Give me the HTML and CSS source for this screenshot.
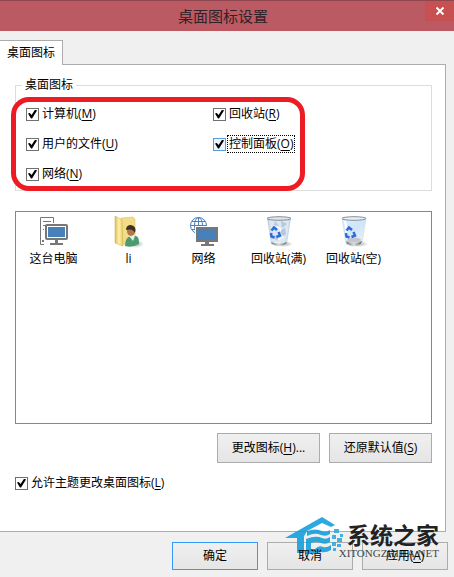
FILE: index.html
```html
<!DOCTYPE html>
<html lang="zh-CN">
<head>
    <meta charset="UTF-8">
    <meta name="viewport" content="width=device-width, initial-scale=1.0">
    <title>桌面图标设置</title>
    <link rel="stylesheet" href="styles.css">
</head>
<body>

    <!-- Title bar -->
    <header class="titlebar">
        <h1>桌面图标设置</h1>
        <button class="close" type="button" aria-label="关闭">
            <svg width="10" height="8" viewBox="0 0 10 8"><path d="M1.5 0.5L8.5 7.5M8.5 0.5L1.5 7.5" stroke="#fff" stroke-width="2"/></svg>
        </button>
    </header>

    <div class="tabs" role="tablist">
        <button class="tab" type="button" role="tab" aria-selected="true">桌面图标</button>
    </div>

    <main class="panel">
        <fieldset class="group">
            <legend>桌面图标</legend>
            <label class="check"><input type="checkbox" checked><span>计算机(<u>M</u>)</span></label>
            <label class="check"><input type="checkbox" checked><span>回收站(<u>R</u>)</span></label>
            <label class="check"><input type="checkbox" checked><span>用户的文件(<u>U</u>)</span></label>
            <label class="check focused"><input type="checkbox" checked><span>控制面板(<u>O</u>)</span></label>
            <label class="check"><input type="checkbox" checked><span>网络(<u>N</u>)</span></label>
        </fieldset>

        <ul class="icons">
            <li>
                <!-- This PC -->
                <svg width="32" height="32" viewBox="0 0 32 32">
                    <path d="M6 28.500H2.500V1.500H15.500V7M5 5.500H13M5 9.500H8M5 13.500H6" fill="none" stroke="#777"/>
                    <path d="M4 24h2v2H4z" fill="#777"/>
                    <rect x="8" y="9" width="21" height="14" rx="1" fill="#fff" stroke="#777" stroke-width="2"/>
                    <rect x="10" y="11" width="17" height="10" fill="#4881b9"/>
                    <path d="M17 24h3v3h5v2H12v-2h5z" fill="#777"/>
                </svg>
                <span>这台电脑</span>
            </li>
            <li>
                <!-- User folder -->
                <svg width="32" height="32" viewBox="0 0 32 32">
                    <defs>
                        <linearGradient id="folder" x2="1"><stop stop-color="#e1bd57"/><stop offset=".5" stop-color="#fff0aa"/><stop offset="1" stop-color="#e6c666"/></linearGradient>
                        <radialGradient id="floor"><stop stop-color="#777" stop-opacity=".6"/><stop offset="1" stop-color="#777" stop-opacity="0"/></radialGradient>
                    </defs>
                    <ellipse cx="23" cy="28" rx="8" ry="4" fill="url(#floor)"/>
                    <path d="M8 2L20 1L22 3V26L8 29z" fill="#f3dc88" stroke="#d9b95b" stroke-width=".5"/>
                    <path d="M2 0L9 4L10 30L2 27z" fill="url(#folder)" stroke="#cfab4c" stroke-width=".5"/>
                    <path d="M12 30Q12 21 18 20Q26 18 26 26V28Q19 32 12 30z" fill="#4a9c70"/>
                    <path d="M16 20L20 17L22 20L20 25z" fill="#e9eee5"/>
                    <ellipse cx="18" cy="15" rx="4" ry="5" fill="#b07747"/>
                    <path d="M13 14Q13 9 18 9Q24 10 22 17Q20 12 13 14z" fill="#3c3128"/>
                </svg>
                <span>li</span>
            </li>
            <li>
                <!-- Network -->
                <svg width="32" height="32" viewBox="0 0 32 32">
                    <g fill="none" stroke="#4881b9">
                        <circle cx="10.500" cy="9.500" r="8"/>
                        <ellipse cx="10.500" cy="9.500" rx="4" ry="8"/>
                        <path d="M10.500 1.500V17.500M2.500 9.500H18.500M4 5.500H17M4 13.500H17"/>
                    </g>
                    <rect x="7" y="10" width="24" height="17" fill="#fff"/>
                    <rect x="9" y="12" width="20" height="13" fill="#fff" stroke="#777" stroke-width="2"/>
                    <rect x="10" y="13" width="18" height="11" fill="#4881b9"/>
                    <path d="M17 26h4v2h5v2H13v-2h4z" fill="#777"/>
                </svg>
                <span>网络</span>
            </li>
            <li>
                <!-- Recycle bin, full -->
                <svg width="32" height="32" viewBox="0 0 32 32">
                    <defs>
                        <linearGradient id="glass" x2="1"><stop stop-color="#b9cbdc"/><stop offset=".4" stop-color="#eaf4fd"/><stop offset="1" stop-color="#c3d2e0"/></linearGradient>
                        <linearGradient id="base" x2="1"><stop stop-color="#777"/><stop offset=".5" stop-color="#ddd"/><stop offset="1" stop-color="#666"/></linearGradient>
                    </defs>
                    <ellipse cx="21" cy="28" rx="9" ry="3" fill="url(#floor)"/>
                    <path d="M4 2H28L24 28Q16 32 8 28z" fill="url(#glass)"/>
                    <path d="M6 5L11 2L15 6L20 2L26 5L25 15L22 25L10 26z" fill="#dbe7f1"/>
                    <path d="M12 5L16 10L11 9zM18 5L24 8L19 12zM17 14L22 12L23 18L18 22zM9 21L14 19L15 25z" fill="#b5c9da"/>
                    <path d="M14 11L18 13L16 17L20 21L15 24" fill="none" stroke="#f5fbff" stroke-width="1.500"/>
                    <path d="M8 26Q16 29 24 26L23 28Q16 32 9 28z" fill="url(#base)"/>
                    <ellipse cx="16" cy="2.500" rx="12" ry="1.800" fill="#dce5ed" stroke="#8a8f94"/>
                    <path d="M8.500 14.500L11 11.500L14 14M15.500 16L17 19.500L13.500 21M11.500 21.500L8.500 20.500L8 17" fill="none" stroke="#2d6bdc" stroke-width="2.500"/>
                </svg>
                <span>回收站(满)</span>
            </li>
            <li>
                <!-- Recycle bin, empty -->
                <svg width="32" height="32" viewBox="0 0 32 32">
                    <defs>
                        <linearGradient id="empty" x2=".6" y2="1"><stop stop-color="#d9edff"/><stop offset=".5" stop-color="#cfe5fa"/><stop offset="1" stop-color="#eee"/></linearGradient>
                    </defs>
                    <ellipse cx="21" cy="28" rx="9" ry="3" fill="url(#floor)"/>
                    <path d="M4 2H28L24 28Q16 32 8 28z" fill="url(#empty)" stroke="#c5d2df" stroke-width=".5"/>
                    <path d="M7 5L10 25" stroke="#fff" stroke-width="2"/>
                    <ellipse cx="16" cy="24" rx="7" ry="2.500" fill="#c3c7cb"/>
                    <path d="M8 25Q16 29 24 25L23 28Q16 32 9 28z" fill="url(#base)"/>
                    <ellipse cx="16" cy="2.500" rx="12" ry="1.800" fill="#e6f1fa" stroke="#8a8f94"/>
                    <path d="M8.500 14.500L11 11.500L14 14M15.500 16L17 19.500L13.500 21M11.500 21.500L8.500 20.500L8 17" fill="none" stroke="#2d6bdc" stroke-width="2.500"/>
                </svg>
                <span>回收站(空)</span>
            </li>
        </ul>

        <div class="actions">
            <button class="btn" type="button">更改图标(<u>H</u>)...</button>
            <button class="btn" type="button">还原默认值(<u>S</u>)</button>
        </div>

        <label class="check"><input type="checkbox" checked><span>允许主题更改桌面图标(<u>L</u>)</span></label>
    </main>

    <footer class="footer">
        <!-- Site mark, under the button labels -->
        <div class="mark">
            <svg width="60" height="38" viewBox="0 0 60 38">
                <path d="M0 21L37 0L50 8L46 10L37 6L22 14L18 21z" fill="#16a0dc"/>
                <path d="M12 20H19V36H12zM22 14Q31 11 37 14Q41 16 45 13V17Q41 20 36 18Q30 15 22 19zM21 22Q31 18 37 21Q41 23 45 20V25Q41 28 36 26Q31 24 26 26V32H30Q34 28 38 30Q42 31 46 28V33Q41 36 36 35Q32 35 29 37H21z" fill="#16a0dc"/>
                <path d="M49 12h5v4h-5zM55 17h3v3h-3zM47 18h4v4h-4zM52 21h5v4h-5zM47 25h4v4h-4zM52 27h4v3h-4zM48 31h3v3h-3z" fill="#35a9df"/>
            </svg>
            <div class="mark-text">
                <strong>系统之家</strong>
                <small>XITONGZHIJIA.NET</small>
            </div>
        </div>

        <button class="btn default" type="button"><span>确定</span></button>
        <button class="btn" type="button"><span>取消</span></button>
        <button class="btn" type="button"><span>应用(<u>A</u>)</span></button>
    </footer>

</body>
</html>
```
FILE: styles.css
```css
* {
    box-sizing: border-box;
}
body {
    margin: 0;
    min-height: 100vh;
    background-color: #f0f0f0;
    color: #000;
    font-family: "Open Sans", "Noto Sans CJK SC", sans-serif;
    font-size: 12px;
    line-height: 16px;
}
button {
    font: inherit;
    color: inherit;
}
u {
    text-underline-offset: 2px;
}

/* Title bar */
.titlebar {
    position: relative;
    height: 31px;
    padding-right: 8px;
    border-top: 1px solid #8f464e;
    background-color: #bc5a64;
    text-align: center;
}
.titlebar h1 {
    margin: 0;
    font-size: 15px;
    font-weight: normal;
    line-height: 30px;
    color: #2f2226;
}
.close {
    position: absolute;
    top: 0;
    right: 0;
    display: flex;
    align-items: center;
    justify-content: center;
    width: 29px;
    height: 20px;
    padding: 0;
    border: none;
    background-color: #c75050;
}

/* Tabs */
.tabs {
    display: flex;
    padding-top: 9px;
}
.tab {
    position: relative;
    z-index: 1;
    height: 25px;
    margin-bottom: -1px;
    padding: 0 7px;
    border: 1px solid #acacac;
    border-width: 1px 1px 0 0;
    background-color: #fff;
}
.panel {
    margin-right: 8px;
    padding: 12px 13px 39px 15px;
    border: 1px solid #acacac;
    border-left: none;
    background-color: #fff;
}

/* Checkbox group */
.group {
    position: relative;
    display: grid;
    grid-template-columns: 187px 1fr;
    grid-auto-rows: 30px;
    align-items: center;
    margin: 0;
    padding: 6px 10px 1px;
    border: 1px solid #dcdcdc;
}
.group legend {
    margin-left: -4px;
    padding: 0 3px;
}
/* Red ring around the options */
.group::after {
    content: "";
    position: absolute;
    top: 4px;
    left: -5px;
    box-sizing: border-box;
    width: 294px;
    height: 94px;
    border: 5px solid #ed1c24;
    border-radius: 18px;
    pointer-events: none;
}
.check {
    display: flex;
    align-items: center;
    gap: 1px;
}
.check span {
    padding: 0 1px;
    border: 1px solid transparent;
    white-space: nowrap;
}
.check input {
    appearance: none;
    display: grid;
    place-items: center;
    flex: none;
    width: 13px;
    height: 13px;
    margin: 0;
    border: 1px solid #707070;
    background-color: #fff;
}
.check input:checked::after {
    content: "";
    width: 9px;
    height: 9px;
    background-color: #000;
    clip-path: polygon(0 45%, 20% 40%, 40% 62%, 80% 0, 100% 12%, 45% 100%, 33% 100%);
}
.focused input {
    border-color: #5a9bd8;
    background-color: #ecf4fc;
}
.focused span {
    border: 1px dotted #000;
}

/* Icon list */
.icons {
    display: flex;
    align-items: flex-start;
    min-height: 213px;
    margin: 20px 0 9px;
    padding: 4px 0;
    border: 1px solid #828790;
    list-style: none;
}
.icons li {
    display: flex;
    flex-direction: column;
    align-items: center;
    gap: 3px;
    width: 75px;
}

/* Buttons */
.btn {
    height: 30px;
    padding: 0;
    border: 1px solid #acacac;
    background-image: linear-gradient(#f0f0f0, #e5e5e5);
}
.actions {
    display: flex;
    justify-content: flex-end;
    gap: 9px;
    margin-bottom: 11px;
}
.actions .btn {
    width: 103px;
}
.footer {
    position: relative;
    display: flex;
    justify-content: flex-end;
    gap: 9px;
    padding: 10px 6px 7px;
}
.footer .btn {
    width: 86px;
    height: 28px;
}
.footer .default {
    border-color: #3399ff;
}
/* Labels stay readable on top of the mark */
.footer .btn span {
    position: relative;
    z-index: 2;
}

/* Site mark */
.mark {
    position: absolute;
    z-index: 1;
    right: 15px;
    bottom: 17px;
    display: flex;
    align-items: flex-end;
    pointer-events: none;
}
.mark svg {
    margin: 0 -6px 5px 0;
    opacity: 0.9;
}
.mark-text {
    display: flex;
    flex-direction: column;
    align-items: flex-end;
}
.mark strong {
    font-size: 23px;
    line-height: 22px;
    color: #222;
}
.mark small {
    font-family: "Liberation Serif", serif;
    font-size: 11px;
    line-height: 14px;
    color: #444;
}
```
